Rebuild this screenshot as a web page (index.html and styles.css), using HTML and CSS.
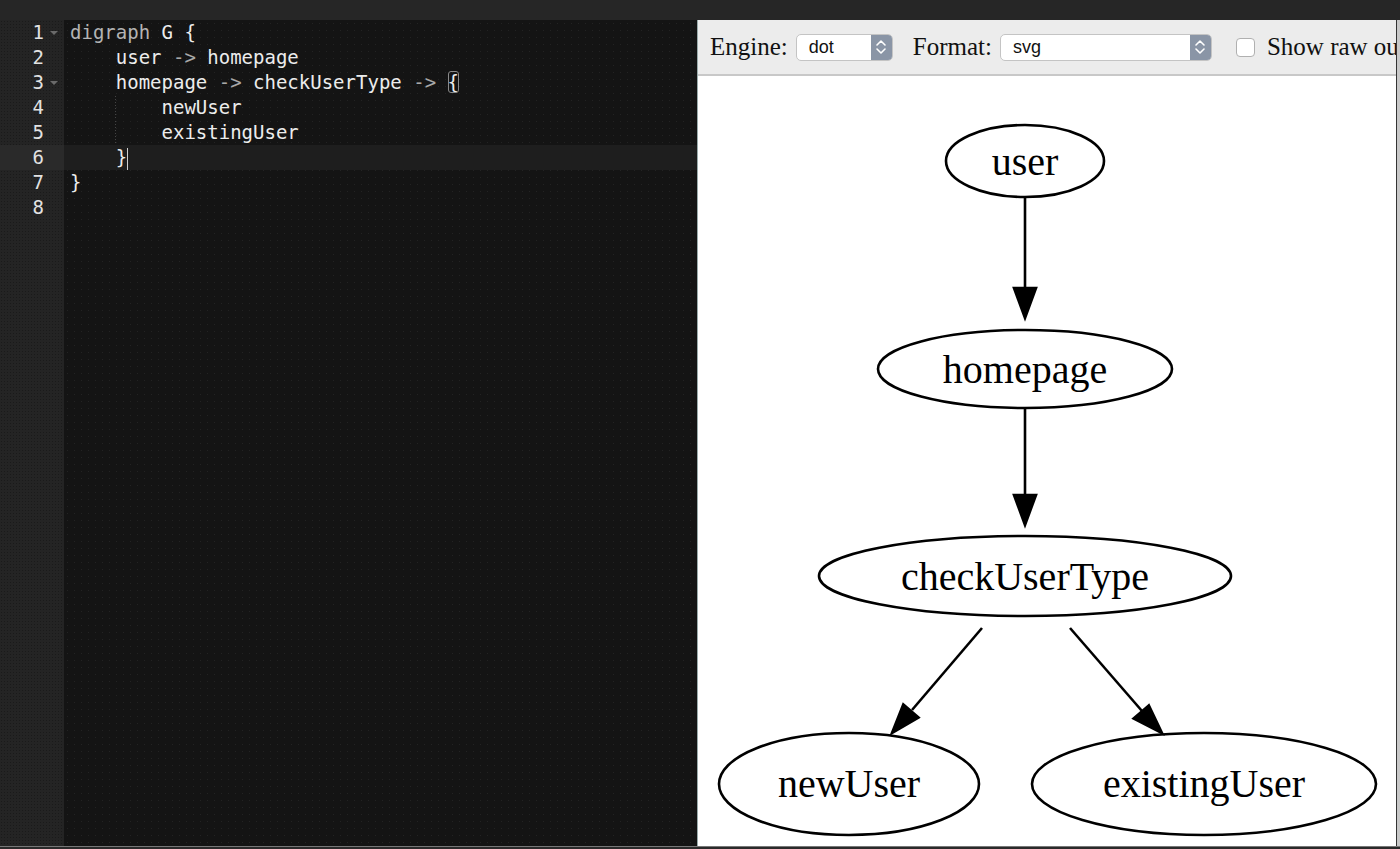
FILE: index.html
```html
<!DOCTYPE html>
<html>
<head>
<meta charset="utf-8">
<link rel="stylesheet" href="styles.css">
</head>
<body>
<div class="topbar"></div>
<div class="main">
  <div class="editor">
    <div class="gutter">
      <div class="gl">1<span class="fold"></span></div>
      <div class="gl">2</div>
      <div class="gl">3<span class="fold"></span></div>
      <div class="gl">4</div>
      <div class="gl">5</div>
      <div class="gl active">6</div>
      <div class="gl">7</div>
      <div class="gl">8</div>
    </div>
    <div class="code">
      <div class="cl"><span class="kw">digraph</span> G {</div>
      <div class="cl">    user <span class="op">-&gt;</span> homepage</div>
      <div class="cl">    homepage <span class="op">-&gt;</span> checkUserType <span class="op">-&gt;</span> <span class="match">{</span></div>
      <div class="cl"><span class="guide">    </span>    newUser</div>
      <div class="cl"><span class="guide">    </span>    existingUser</div>
      <div class="cl active">    }<span class="cursor"></span></div>
      <div class="cl">}</div>
      <div class="cl"></div>
    </div>
  </div>
  <div class="panel">
    <div class="toolbar">
      <label class="lbl">Engine:</label>
      <div class="select sel-engine"><span class="val">dot</span><span class="arrow"><svg width="12" height="18" viewBox="0 0 12 18"><path d="M2 7 L6 3 L10 7 M2 11 L6 15 L10 11" fill="none" stroke="#fff" stroke-width="1.6" stroke-linecap="round" stroke-linejoin="round"/></svg></span></div>
      <label class="lbl">Format:</label>
      <div class="select sel-format"><span class="val">svg</span><span class="arrow"><svg width="12" height="18" viewBox="0 0 12 18"><path d="M2 7 L6 3 L10 7 M2 11 L6 15 L10 11" fill="none" stroke="#fff" stroke-width="1.6" stroke-linecap="round" stroke-linejoin="round"/></svg></span></div>
      <span class="checkbox"></span>
      <label class="lbl raw">Show raw output</label>
    </div>
    <div class="graph">
      <svg class="gsvg" width="698" height="770" viewBox="698 76 698 770">
        <g fill="none" stroke="#000" stroke-width="2.6">
          <ellipse cx="1025" cy="161" rx="79" ry="36"/>
          <ellipse cx="1025" cy="369" rx="147" ry="39"/>
          <ellipse cx="1025" cy="576" rx="206" ry="40"/>
          <ellipse cx="849" cy="784" rx="130" ry="51"/>
          <ellipse cx="1204" cy="784" rx="172" ry="51"/>
          <line x1="1025" y1="197" x2="1025" y2="290"/>
          <line x1="1025" y1="408" x2="1025" y2="497"/>
          <line x1="982" y1="628" x2="912" y2="710"/>
          <line x1="1070" y1="628" x2="1142" y2="711"/>
        </g>
        <g fill="#000" stroke="#000" stroke-width="2.6" stroke-linejoin="miter">
          <polygon points="1014,288 1036,288 1025,318"/>
          <polygon points="1014,495 1036,495 1025,525"/>
          <polygon points="918.5,717.5 903.3,704.5 892,733"/>
          <polygon points="1148.8,705.4 1133.6,718.4 1162,733"/>
        </g>
        <g class="nodetext" text-anchor="middle">
          <text x="1025" y="175">user</text>
          <text x="1025" y="383">homepage</text>
          <text x="1025" y="590">checkUserType</text>
          <text x="849" y="797">newUser</text>
          <text x="1204" y="797">existingUser</text>
        </g>
      </svg>
    </div>
  </div>
  <div class="rightedge"></div>
</div>
<div class="bottombar"></div>
</body>
</html>
```
FILE: styles.css
```css
html, body {
  margin: 0;
  padding: 0;
}
body {
  width: 1400px;
  height: 849px;
  overflow: hidden;
  background: #262626;
}
.topbar {
  height: 20px;
  background: #262626;
}
.main {
  display: flex;
  height: 826px;
}
.editor {
  width: 697px;
  flex-shrink: 0;
  display: flex;
  background: #141414;
  font-family: "DejaVu Sans Mono", monospace;
  font-size: 19px;
  color: #ececec;
}
.gutter {
  width: 64px;
  background-color: #242424;
  background-image: radial-gradient(#1a1a1a 0.7px, transparent 0.8px);
  background-size: 3px 3px;
  flex-shrink: 0;
}
.gl {
  height: 25px;
  line-height: 25px;
  text-align: right;
  padding-right: 20px;
  position: relative;
  color: #e2e2e2;
}
.gl.active {
  background-color: #2a2a2a;
}
.fold {
  position: absolute;
  right: 6px;
  top: 11px;
  width: 0;
  height: 0;
  border-left: 4px solid transparent;
  border-right: 4px solid transparent;
  border-top: 4px solid #6a6a6a;
}
.code {
  flex: 1;
  background-image: radial-gradient(#232323 0.6px, transparent 0.7px);
  background-size: 7px 7px;
}
.cl {
  height: 25px;
  line-height: 25px;
  padding-left: 6px;
  white-space: pre;
  position: relative;
}
.cl.active {
  background: #1e1e1e;
}
.kw {
  color: #b4b4b4;
}
.op {
  color: #a8a8a8;
}
.match {
  outline: 1px solid #8a8a8a;
  outline-offset: -1px;
  border-radius: 3px;
}
.guide {
  background-image: linear-gradient(#444 50%, transparent 50%);
  background-size: 1px 3px;
  background-repeat: repeat-y;
  background-position: 45px 0;
}
.cursor {
  display: inline-block;
  width: 1px;
  height: 22px;
  background: #cfcfcf;
  vertical-align: middle;
}
.panel {
  width: 698px;
  flex-shrink: 0;
  background: #fff;
  border-left: 1px solid #9aa;
  display: flex;
  flex-direction: column;
  overflow: hidden;
}
.toolbar {
  height: 54px;
  background: #ececec;
  border-bottom: 2px solid #c8c8c8;
  display: flex;
  align-items: center;
  padding-left: 12px;
  white-space: nowrap;
  font-family: "Liberation Serif", serif;
  font-size: 25px;
  color: #111;
}
.toolbar > * {
  flex-shrink: 0;
}
.lbl {
  margin-right: 8px;
}
.select {
  height: 27px;
  border: 1px solid #c4c4c4;
  border-radius: 5px;
  background: #fff;
  display: flex;
  align-items: center;
  justify-content: space-between;
  overflow: hidden;
  box-sizing: border-box;
  margin-right: 20px;
}
.sel-engine {
  width: 97px;
}
.sel-format {
  width: 212px;
  margin-right: 24px;
}
.val {
  font-family: "Liberation Sans", Arial, sans-serif;
  font-size: 18px;
  color: #111;
  padding-left: 12px;
}
.arrow {
  width: 21px;
  height: 100%;
  background: #8a95a6;
  display: flex;
  align-items: center;
  justify-content: center;
}
.checkbox {
  width: 17px;
  height: 17px;
  border: 1px solid #b0b0b0;
  border-radius: 4px;
  background: #fff;
  margin-right: 12px;
}
.graph {
  flex: 1;
}
.gsvg {
  display: block;
}
.nodetext {
  font-family: "Liberation Serif", serif;
  font-size: 40px;
  fill: #000;
}
.rightedge {
  flex: 1;
  background: #c8c8c8;
  border-left: 1px solid #333;
}
.bottombar {
  height: 3px;
  background: #2a2a2a;
  border-top: 1px solid #777;
  box-sizing: border-box;
}
```
